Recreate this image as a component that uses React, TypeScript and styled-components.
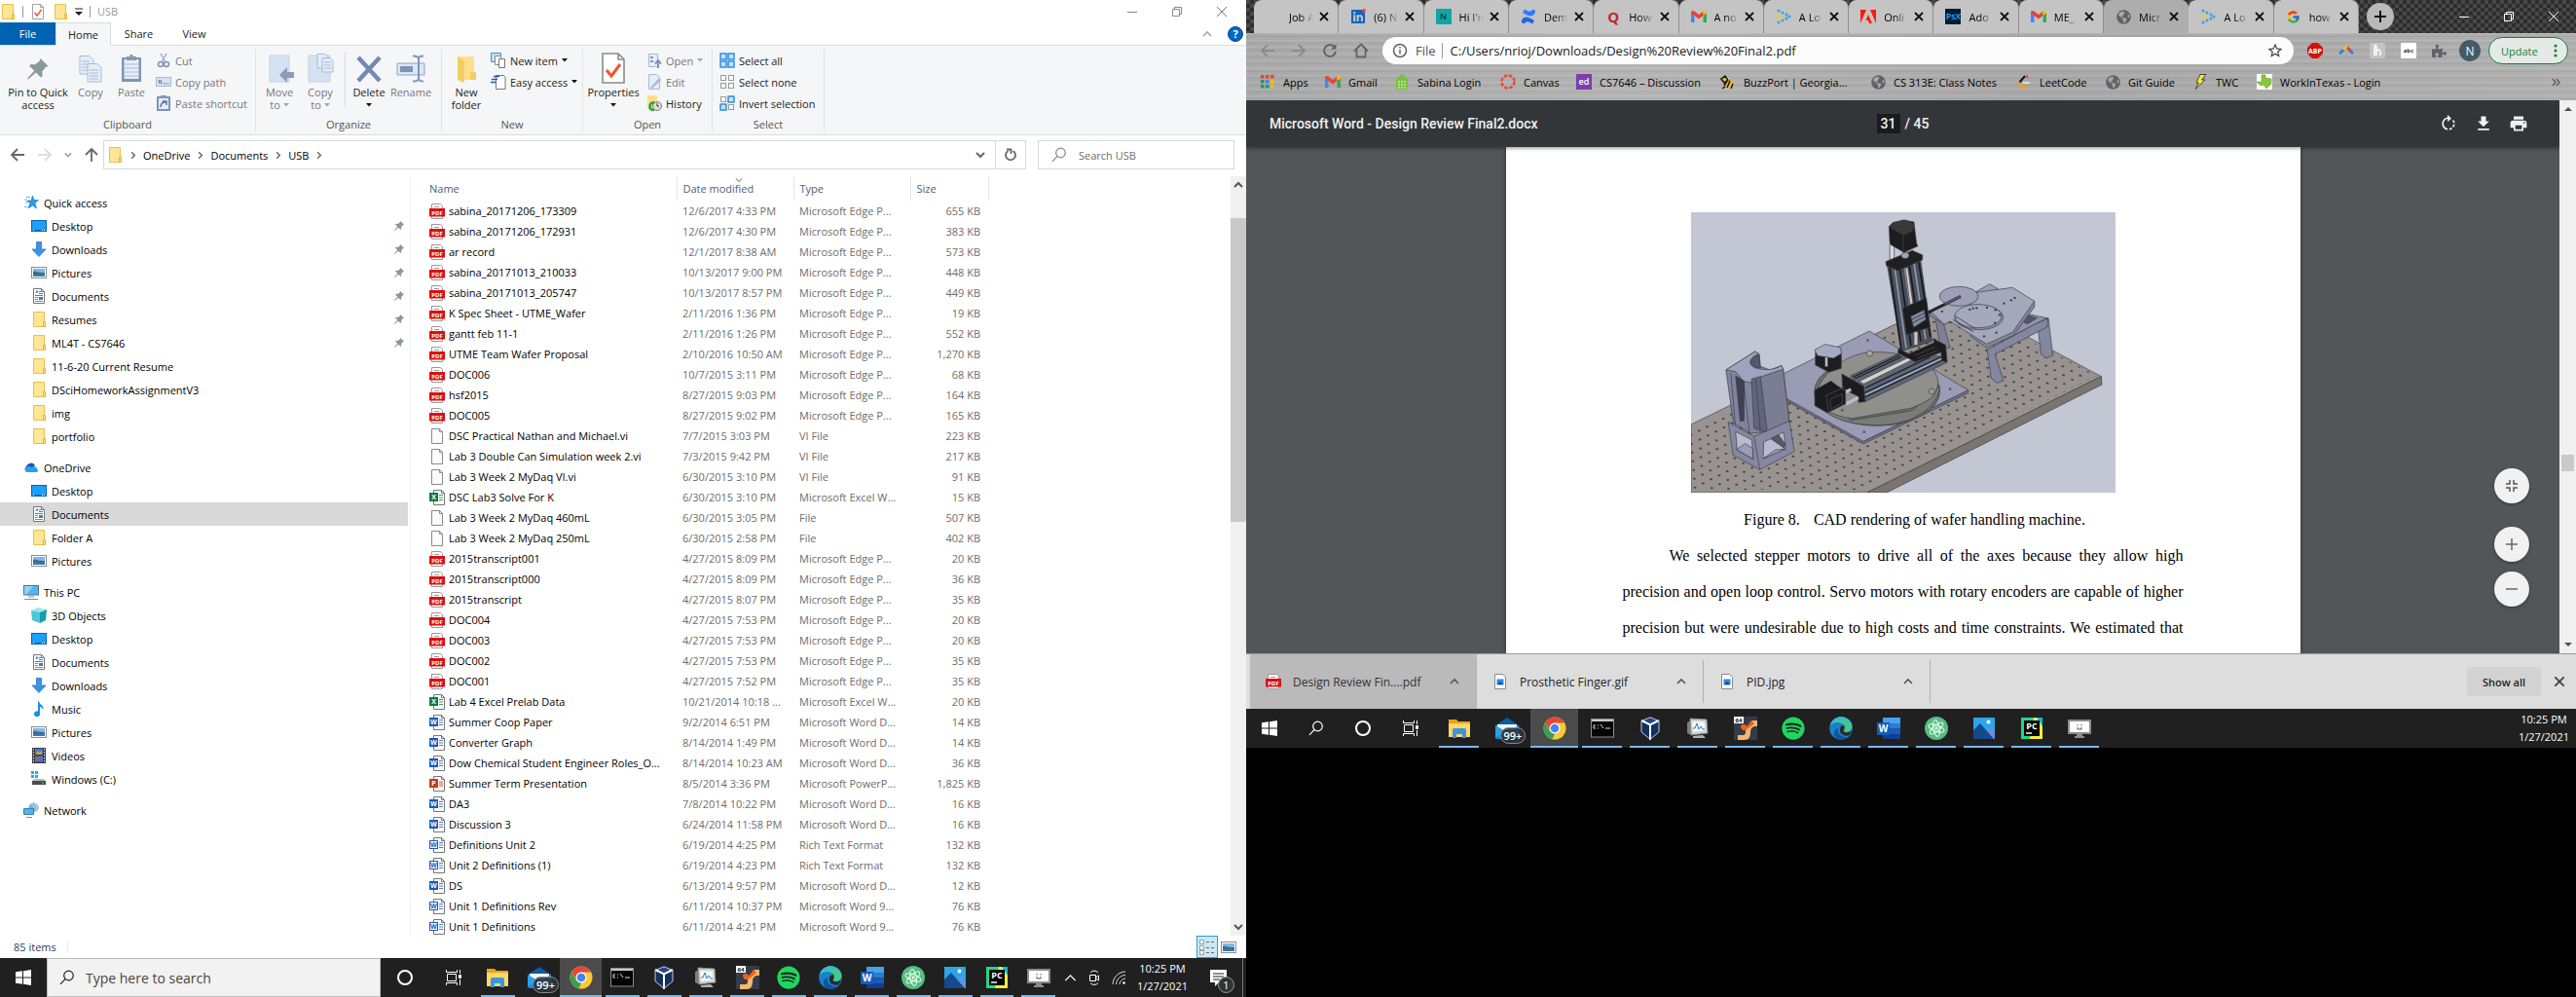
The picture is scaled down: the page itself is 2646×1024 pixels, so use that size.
import React from 'react';
import styled, { createGlobalStyle, css, StyleSheetManager } from 'styled-components';
import { FcGoogle } from 'react-icons/fc';
import { FaSpotify, FaLinkedin, FaGlobeAmericas, FaPuzzlePiece } from 'react-icons/fa';
import { MdRotateRight, MdDownload, MdPrint, MdStarBorder } from 'react-icons/md';

const UI = `"Open Sans", "Noto Sans", sans-serif`;

const Global = createGlobalStyle`
  *, *::before, *::after { box-sizing: border-box; }
  body { margin: 0; background: #000; font-family: ${UI}; font-size: 11px; color: #000; }
  button, input { font: inherit; color: inherit; border: 0; background: none; padding: 0; margin: 0; }
  input:focus { outline: none; }
  a { color: inherit; text-decoration: none; }
  svg { display: block; flex: none; }
`;

/* props that only feed the templates and never reach the DOM */
const STYLE_PROPS = new Set(['w', 'h', 'c', 'off', 'on', 'run', 'kind', 'pad', 'left', 'root', 'active', 'before', 'size', 'bg', 'fg', 'big']);
const forward = (prop: string, target: unknown) => (typeof target === 'string' ? !STYLE_PROPS.has(prop) : true);

/* ---------- shared icons ---------- */

type IconProps = { size?: number };

const FolderIcon = () => (
  <svg width="16" height="16" viewBox="0 0 16 16">
    <path d="M2.500.5h11v10l1 1v4h-12z" fill="#ffe694" stroke="#e8c04a" />
    <path d="M12.500 15.500v-5h2v5z" fill="#ffe08a" stroke="#e3b535" />
  </svg>
);
const DesktopIcon = () => (
  <svg width="16" height="16" viewBox="0 0 16 16">
    <rect x=".5" y="2.500" width="15" height="11" fill="#1aa0ff" stroke="#0a64a8" />
    <path d="M1 12h14v1.500H1z" fill="#0a6fc0" />
    <path d="M2 12.500h1M11 12.500h1M13 12.500h1" stroke="#fff" />
  </svg>
);
const DownIcon = () => (
  <svg width="16" height="16" viewBox="0 0 16 16">
    <path d="M5.500.5h5V8h4.500L8 15.500 1 8h4.500z" fill="#3a94e4" stroke="#2a77c0" strokeWidth=".8" />
  </svg>
);
const PictureIcon = () => (
  <svg width="16" height="16" viewBox="0 0 16 16">
    <rect x=".5" y="2.500" width="15" height="11" fill="#fff" stroke="#8d8d8d" />
    <path d="M2 4h12v4H2z" fill="#7db8ec" />
    <path d="M2 7c3-1 5 1 12 1v4H2z" fill="#3c6f86" />
    <path d="M2 10h12v2H2z" fill="#3a78b8" />
  </svg>
);
const DocIcon = () => (
  <svg width="16" height="16" viewBox="0 0 16 16">
    <path d="M2.500.5h8l3 3v12h-11z" fill="#fff" stroke="#777" />
    <path d="M10.500.5v3h3" fill="none" stroke="#777" />
    <path d="M5 5l1-2.500L7 5M8 3.500h2M8 5.500h4M4 7.500h8" stroke="#1d8fe0" fill="none" />
    <path d="M4 9.500h3M4 11.500h3M4 13.500h8" stroke="#888" />
    <path d="M8 9h4v3H8z" fill="#3f7fa8" />
  </svg>
);
const StarIcon = () => (
  <svg width="16" height="16" viewBox="0 0 16 16">
    <path d="M9.500 1l1.500 4.500h4.500L12 8.500l1.500 5.500-4-3-4.500 3L7 8.500 3.500 6H8z" fill="#2b9ae8" stroke="#1676c0" strokeWidth=".6" />
    <path d="M3 2.500h4M1 5h3M2 8h3M1 12.500h3" stroke="#69b8ef" />
  </svg>
);
const CloudIcon = () => (
  <svg width="16" height="16" viewBox="0 0 16 16">
    <path d="M3 12a3 3 0 0 1 0-5 5 5 0 0 1 9-1l-6 6z" fill="#0a5fb4" />
    <path d="M3 13a3 3 0 0 1 1-5.500c2-1 4 0 5 1 1-2 5-1.500 5 1A2 2 0 0 1 14 13z" fill="#2aa0e8" />
  </svg>
);
const PcIcon = () => (
  <svg width="16" height="16" viewBox="0 0 16 16">
    <rect x=".5" y="1.500" width="15" height="9.500" fill="#52b5f2" stroke="#5c6f7c" />
    <path d="M1 2h9L3 10.500H1z" fill="#8fd2fa" />
    <path d="M5 13h6M1 15.500h14" stroke="#7a8d99" />
  </svg>
);
const CubeIcon = () => (
  <svg width="16" height="16" viewBox="0 0 16 16">
    <path d="M0 3l7-3 9 2-7 3z" fill="#9be7ee" />
    <path d="M0 3l9 2v11l-8-3z" fill="#4cc7d6" />
    <path d="M9 5l7-3-1 11-6 3z" fill="#169ab0" />
  </svg>
);
const MusicIcon = () => (
  <svg width="16" height="16" viewBox="0 0 16 16">
    <path d="M8 0c0 4 6 4 4 9-.5-2-2-3-3-3v7a3 3 0 1 1-2-2.500V0z" fill="#1592ea" />
  </svg>
);
const VideoIcon = () => (
  <svg width="16" height="16" viewBox="0 0 16 16">
    <path d="M1 0h14v16H1z" fill="#3a3a3a" />
    <path d="M2.500 1v14M13.500 1v14" stroke="#ddd" strokeDasharray="1.500 1.500" />
    <path d="M4 1h8v6H4zM4 8.500h8v6H4z" fill="#3d7ad8" />
    <path d="M5 6l2-3 2 2 2-2v4H5z" fill="#e0a020" />
    <path d="M5 13l3-3 3 3z" fill="#d84a2a" />
  </svg>
);
const DriveIcon = () => (
  <svg width="16" height="16" viewBox="0 0 16 16">
    <path d="M0 0h3v3H0zM4 0h3v3H4zM0 4h3v3H0zM4 4h3v3H4z" fill="#18b3ea" />
    <path d="M3 8h10l2 2H1z" fill="#b9bcbe" />
    <path d="M1 10h14v4H1z" fill="#4a4d50" />
    <path d="M11 12h2" stroke="#4ade4a" />
  </svg>
);
const NetworkIcon = () => (
  <svg width="16" height="16" viewBox="0 0 16 16">
    <circle cx="10.500" cy="5.500" r="5" fill="#7fb2d6" />
    <path d="M8 2c3 0 4 3 2 5M12 1c2 3 2 6 0 9" stroke="#dceefa" fill="none" />
    <path d="M.5 6.500h10v6H.5z" fill="#4db4f4" stroke="#3e7da6" />
    <path d="M3 15.500h6" stroke="#7a8d99" />
  </svg>
);
const PinIcon = ({ size = 12 }: IconProps) => (
  <svg width={size} height={size} viewBox="0 0 12 12">
    <path d="M7.500 0L12 4.500l-1.500.5-2 2.500.2 2.500-1 .8L5 8 .5 12 0 11.500 4 7 1.200 4.300l.8-1 2.500.2L7 1.500z" fill="#8a959c" />
  </svg>
);
const Magnifier = ({ color = '#777' }: { color?: string }) => (
  <svg width="16" height="16" viewBox="0 0 16 16" fill="none" stroke={color} strokeWidth="1.200">
    <circle cx="9.500" cy="6" r="4.800" />
    <path d="M6.200 9.400L1 14.800" />
  </svg>
);
const Chevron = ({ dir = 'down', size = 10, color = '#666', width = 1.6 }: { dir?: 'down' | 'up' | 'right'; size?: number; color?: string; width?: number }) => (
  <svg width={size} height={size} viewBox="0 0 10 10" fill="none" stroke={color} strokeWidth={width}>
    <path d={dir === 'down' ? 'M1 3l4 4 4-4' : dir === 'up' ? 'M1 7l4-4 4 4' : 'M3.500 1.500L7 5 3.500 8.500'} />
  </svg>
);
const Triangle = ({ color = '#111' }: { color?: string }) => (
  <svg width="6" height="4" viewBox="0 0 6 4"><path d="M0 0h6L3 3.500z" fill={color} /></svg>
);
const Caption = ({ kind, color }: { kind: 'min' | 'restore' | 'close'; color: string }) => (
  <svg width="12" height="12" viewBox="0 0 12 12" fill="none" stroke={color}>
    {kind === 'min' && <path d="M1 6.500h10" />}
    {kind === 'restore' && <path d="M1.500 3.500h7v7h-7zM3.500 3.500v-2h7v7h-2" />}
    {kind === 'close' && <path d="M1 1l10 10M11 1L1 11" />}
  </svg>
);
const PropsIcon = ({ size = 16 }: IconProps) => (
  <svg width={size} height={size} viewBox="0 0 16 16">
    <path d="M2.500.5h8l3 3v12h-11z" fill="#fff" stroke="#8a8a8a" strokeWidth=".8" />
    <path d="M10.500.5v3h3" fill="none" stroke="#8a8a8a" strokeWidth=".8" />
    <path d="M4.500 9l2.500 3 4.500-6" fill="none" stroke="#f0562a" strokeWidth="1.500" />
  </svg>
);

type FileKind = 'pdf' | 'blank' | 'xls' | 'doc' | 'rtf' | 'ppt';
const IconText = styled.text`
  font-family: ${UI};
  font-weight: 700;
`;
const FileIcon = ({ kind }: { kind: FileKind }) => {
  if (kind === 'blank')
    return (
      <svg width="16" height="16" viewBox="0 0 16 16">
        <path d="M2.500.5h8l3 3v12h-11z" fill="#fbfbfb" stroke="#8a8a8a" />
        <path d="M10.500.5v3h3" fill="none" stroke="#8a8a8a" />
      </svg>
    );
  if (kind === 'pdf')
    return (
      <svg width="16" height="16" viewBox="0 0 16 16">
        <path d="M2.500.5h9l2 2v13h-11z" fill="#fff" stroke="#999" />
        <path d="M5 3.500h5" stroke="#999" />
        <path d="M0 5h16v8.500H0z" fill="#dc0f16" />
        <IconText x="8" y="11.500" fontSize="6" fill="#fff" textAnchor="middle">PDF</IconText>
      </svg>
    );
  const c = kind === 'xls' ? '#107c41' : kind === 'ppt' ? '#c43e1c' : '#185abd';
  const light = kind === 'rtf';
  return (
    <svg width="16" height="16" viewBox="0 0 16 16">
      <path d="M4.500.5h8l3 3v12h-11z" fill="#fff" stroke="#767676" />
      <path d="M12.500.5v3h3" fill="none" stroke="#767676" />
      {kind === 'ppt' ? <path d="M10 5h4v6h-4z" fill="#f6a58d" /> : <path d="M10 5.500h4M10 8h4M10 10.500h4" stroke={c} strokeOpacity=".8" />}
      <rect x=".5" y="3.500" width="8" height="8" fill={light ? '#fff' : c} stroke={c} />
      <IconText x="4.500" y="10" fontSize="7" fill={light ? c : '#fff'} textAnchor="middle">
        {kind === 'xls' ? 'X' : kind === 'ppt' ? 'P' : 'W'}
      </IconText>
    </svg>
  );
};

/* ---------- app icons for the taskbar ---------- */

const WinLogo = () => (
  <svg width="16" height="16" viewBox="0 0 16 16">
    <path d="M0 2.300l7-1v6.200H0zM8 1.200L16 0v7.500H8zM0 8.500h7v6.200l-7-1zM8 8.500h8V16l-8-1.200z" fill="#fff" />
  </svg>
);
const CortanaIcon = () => (
  <svg width="18" height="18" viewBox="0 0 18 18"><circle cx="9" cy="9" r="7" fill="none" stroke="#fff" strokeWidth="2" /></svg>
);
const TaskViewIcon = () => (
  <svg width="18" height="18" viewBox="0 0 18 18" fill="none" stroke="#fff">
    <path d="M2.500 5.500h9v7h-9zM1.500 1v2.500h11V1M1.500 17v-2.500h11V17M15.500 1v4M15.500 11v6" />
    <path d="M14.500 6.500h2v3h-2z" fill="#fff" />
  </svg>
);
const ExplorerIcon = () => (
  <svg width="24" height="24" viewBox="0 0 24 24">
    <path d="M1 3h8l2 2h12v16H1z" fill="#e8a317" />
    <path d="M1 7h22v14H1z" fill="#ffd868" />
    <path d="M5 22v-8a2 2 0 0 1 2-2h10a2 2 0 0 1 2 2v8h-4v-4H9v4z" fill="#3b96dd" />
  </svg>
);
const MailIcon = () => (
  <svg width="24" height="24" viewBox="0 0 24 24">
    <path d="M0 9l12-8 12 8v13H0z" fill="#0c59a4" />
    <path d="M2 8h20v6H2z" fill="#eef6fc" />
    <path d="M0 9l12 7L0 22zM24 9l-12 7 12 6z" fill="#2ba0ea" />
    <path d="M0 23l12-9 12 9z" fill="#1e8bdc" />
  </svg>
);
const ChromeIcon = () => (
  <svg width="24" height="24" viewBox="0 0 24 24">
    <circle cx="12" cy="12" r="11.500" fill="#f9cb36" />
    <path d="M12 .5a11.500 11.500 0 0 1 10 6H12L7 14 2 6.200A11.500 11.500 0 0 1 12 .5z" fill="#e04a3a" />
    <path d="M2 6.200L7 15l5 2.500L9.500 23.200A11.500 11.500 0 0 1 2 6.200z" fill="#35a052" />
    <circle cx="12" cy="12" r="5.500" fill="#fff" />
    <circle cx="12" cy="12" r="4.300" fill="#4284f3" />
  </svg>
);
const CmdIcon = () => (
  <svg width="24" height="24" viewBox="0 0 24 24">
    <rect x=".5" y="2.500" width="23" height="18.500" fill="#050505" stroke="#8c8c8c" />
    <path d="M1 3h22v2H1z" fill="#c5c9cc" />
    <path d="M3 9h2M3 9v3M3 12h2M7 9h1M7 12h1M10 8l3 4M15 12h5" stroke="#ddd" fill="none" />
  </svg>
);
const VBoxIcon = () => (
  <svg width="24" height="24" viewBox="0 0 24 24">
    <path d="M12 0l9 4v12l-9 8-9-8V4z" fill="#16305c" />
    <path d="M12 1l8 3.500-8 4-8-4z" fill="#27477c" />
    <path d="M3 4l9 4.500L21 4M12 8.500V24" stroke="#fff" strokeWidth="2" fill="none" />
    <path d="M12 .8l9 3.700v11.300l-9 7.500-9-7.500V4.500z" fill="none" stroke="#b9cbe4" />
  </svg>
);
const MonitorIcon = () => (
  <svg width="24" height="24" viewBox="0 0 24 24">
    <path d="M1 6l4-2v15l-4-2z" fill="#7c7f7c" />
    <path d="M4 2l17 1 1 14-17 2z" fill="#cfd2cf" stroke="#868886" />
    <path d="M6 5l13 .5.5 9L7 16z" fill="#f3fafc" />
    <path d="M7 12h2l2-5 2 6 2-3 2 3h2" fill="none" stroke="#2a7fb8" />
    <path d="M7 20l10-1 3 3H7z" fill="#b0b2b0" />
  </svg>
);
const UltraIcon = () => (
  <svg width="24" height="24" viewBox="0 0 24 24">
    <path d="M0 0h24v24H0z" fill="#353b48" />
    <path d="M4 19h6c1 0 2-1 2-3 0-5 2-7 5-9l2-3h5v6h-3c-3 1-4 3-4 6 0 5-2 8-6 8H4z" fill="#f6b66c" />
    <path d="M7 9c3-2 5-1 6 1 2-1 3-4 5-6l3 3c-3 2-5 5-9 7-3 1-5-1-5-5z" fill="#f0611c" />
    <path d="M0 0h10v7H0z" fill="#fff" />
    <IconText x="5" y="6" fontSize="6" textAnchor="middle" fill="#111">64</IconText>
  </svg>
);
const EdgeIcon = () => (
  <svg width="24" height="24" viewBox="0 0 24 24">
    <circle cx="12" cy="12" r="11.800" fill="#1b7fd0" />
    <path d="M1 9C3 2 9 0 13 .2 20 1 24 6 23.500 11c-.5 4-4 5.500-8 4.500-2-.5 1-2 .5-5C15 6 6 4 1 9z" fill="#46c78c" />
    <path d="M1 9C3 2 9 0 13 .2 18 1 21 4 22.500 7 16 2 6 3 1 9z" fill="#36b8d8" />
    <path d="M9 12c-1 6 3 10 11 9-3 3-9 4-13 1-4-4-2-9 2-10z" fill="#0f559c" />
    <path d="M15 15.500c4 2 7 0 8-2-.5 3-1 4-3 6-6 1-10-2-9-7 0-2 2-4 4-3 2 2-1 4 0 6z" fill="#2b2b2b" />
  </svg>
);
const WordIcon = () => (
  <svg width="24" height="24" viewBox="0 0 24 24">
    <path d="M6 1h18v6H6z" fill="#41a5ee" /><path d="M6 7h18v5.500H6z" fill="#2b7cd3" />
    <path d="M6 12.500h18V18H6z" fill="#185abd" /><path d="M6 18h18v5H6z" fill="#103f91" />
    <path d="M0 6h13v13H0z" fill="#185abd" />
    <IconText x="6.500" y="16" fontSize="10" textAnchor="middle" fill="#fff">W</IconText>
  </svg>
);
const AtomIcon = () => (
  <svg width="24" height="24" viewBox="0 0 24 24" fill="none" stroke="#e8fff2">
    <circle cx="12" cy="12" r="12" fill="#58bd80" stroke="none" />
    <ellipse cx="12" cy="12" rx="8.500" ry="3.200" transform="rotate(20 12 12)" />
    <ellipse cx="12" cy="12" rx="8.500" ry="3.200" transform="rotate(80 12 12)" />
    <ellipse cx="12" cy="12" rx="8.500" ry="3.200" transform="rotate(140 12 12)" />
    <circle cx="12" cy="12" r="1.200" fill="#e8fff2" />
  </svg>
);
const PhotosIcon = () => (
  <svg width="24" height="24" viewBox="0 0 24 24">
    <path d="M1 1h22v22H1z" fill="#2ba6ea" />
    <path d="M12 15l5-4 6 6v6H12z" fill="#6b8fdd" />
    <path d="M1 14l7-7 14 16H1z" fill="#144a8c" />
    <circle cx="16.500" cy="5.500" r="2" fill="#fff" />
  </svg>
);
const PyCharmIcon = () => (
  <svg width="24" height="24" viewBox="0 0 24 24">
    <path d="M1 1h22v22H1z" fill="#21d789" /><path d="M14 1h9v22H10z" fill="#f3ee3d" /><path d="M17 1h6v9z" fill="#0fb8dd" />
    <path d="M4 4h16v16H4z" fill="#000" />
    <IconText x="12" y="13" fontSize="9" textAnchor="middle" fill="#fff">PC</IconText>
    <path d="M6 17h6" stroke="#fff" strokeWidth="1.500" />
  </svg>
);
const ScreenIcon = () => (
  <svg width="24" height="24" viewBox="0 0 24 24">
    <rect x="1" y="4" width="22" height="13" fill="#fff" stroke="#8c8c8c" strokeWidth="2" />
    <path d="M10 8v1.500M14 8v1.500M10 11v2h4v-2" stroke="#555" fill="none" />
    <path d="M9 18h6v2h2v2H7v-2h2z" fill="#8c8c8c" />
  </svg>
);

/* ---------- page ---------- */

const Desktop = styled.div`
  display: grid;
  grid-template-columns: 1280fr 1366fr;
  align-items: start;
`;

/* ---------- explorer ---------- */

const Explorer = styled.section`
  display: flex;
  flex-direction: column;
  height: 100vh;
  min-width: 0;
  background: #fff;
`;
const TitleBar = styled.header`
  display: flex;
  align-items: center;
  height: 23px;
  color: #999;
`;
const TitleLeft = styled.div`
  display: flex;
  align-items: center;
  gap: 7px;
`;
const Divider = styled.i<{ h?: number; c?: string }>`
  width: 1px;
  height: ${(p) => p.h ?? 12}px;
  background: ${(p) => p.c ?? '#999'};
  flex: none;
`;
const CaptionButtons = styled.div<{ pad: number }>`
  display: flex;
  align-self: stretch;
  margin-left: auto;
  padding-right: ${(p) => p.pad}px;
  button {
    display: flex;
    align-items: center;
    justify-content: center;
    width: 46px;
  }
`;
const RibbonTabs = styled.nav`
  display: flex;
  align-items: stretch;
  height: 24px;
  border-bottom: 1px solid #dadbdc;
  color: #222;
`;
const RibbonTab = styled.button<{ kind?: 'file' | 'active' }>`
  width: 57px;
  ${(p) => p.kind === 'file' && css`background: #0063b1; color: #fff;`}
  ${(p) => p.kind === 'active' && css`
    background: #f5f6f7;
    border: 1px solid #dadbdc;
    border-bottom: 0;
    margin-bottom: -1px;
  `}
`;
const HelpArea = styled.div`
  display: flex;
  align-items: center;
  gap: 16px;
  margin-left: auto;
  padding-right: 3px;
`;
const HelpButton = styled.button`
  width: 16px;
  height: 16px;
  border-radius: 50%;
  background: #0067c5;
  border: 1px solid #0a4486;
  color: #fff;
  font-weight: 700;
  line-height: 14px;
`;
const Ribbon = styled.div`
  display: flex;
  height: 92px;
  padding: 3px 0;
  background: #f5f6f7;
  border-bottom: 1px solid #dadbdc;
  color: #222;
`;
const Group = styled.div<{ w: number; pad: number }>`
  display: flex;
  flex-direction: column;
  width: ${(p) => p.w}px;
  border-right: 1px solid #e2e3e4;
  > div {
    display: flex;
    flex: 1;
    padding: 4px 0 0 ${(p) => p.pad}px;
  }
  > div > i { margin: 0 4px; }
`;
const GroupLabel = styled.span`
  line-height: 14px;
  text-align: center;
  color: #555;
`;
const BigButton = styled.button<{ w: number; off?: boolean }>`
  display: flex;
  flex-direction: column;
  align-items: center;
  width: ${(p) => p.w}px;
  line-height: 13px;
  color: ${(p) => (p.off ? '#777' : '#222')};
  white-space: nowrap;
  > svg { height: 32px; margin-bottom: 2px; }
  span { display: flex; align-items: center; gap: 3px; height: 13px; }
`;
const SmallColumn = styled.div<{ left: number }>`
  display: flex;
  flex-direction: column;
  gap: 6px;
  margin-left: ${(p) => p.left}px;
`;
const SmallButton = styled.button<{ off?: boolean }>`
  display: flex;
  align-items: center;
  gap: 4px;
  height: 16px;
  white-space: nowrap;
  color: ${(p) => (p.off ? '#777' : '#222')};
`;
const AddressRow = styled.div`
  display: flex;
  align-items: center;
  height: 42px;
  padding: 0 12px 2px 10px;
`;
const NavButtons = styled.div`
  display: flex;
  align-items: center;
  width: 96px;
  gap: 12px;
`;
const AddressBox = styled.div`
  display: flex;
  flex: 1;
  height: 30px;
  border: 1px solid #d9d9d9;
  align-items: center;
  padding-left: 3px;
  ol { display: flex; align-items: center; list-style: none; margin: 0; padding: 0; }
  li { display: flex; align-items: center; gap: 6px; padding-left: 6px; }
  > button:first-of-type { margin-left: auto; margin-right: 10px; }
`;
const Refresh = styled.button`
  display: flex;
  align-items: center;
  justify-content: center;
  width: 31px;
  align-self: stretch;
  border-left: 1px solid #d9d9d9;
`;
const SearchBox = styled.label`
  display: flex;
  align-items: center;
  gap: 12px;
  width: 202px;
  height: 30px;
  margin-left: 12px;
  padding-left: 13px;
  border: 1px solid #d9d9d9;
  input { flex: 1; min-width: 0; }
  input::placeholder { color: #6d6d6d; opacity: 1; }
`;
const Body = styled.div`
  display: flex;
  flex: 1;
  min-height: 0;
  overflow: hidden;
`;
const Tree = styled.nav`
  width: 422px;
  flex: none;
  padding-top: 15px;
  border-right: 1px solid #f0f0f0;
  ul { list-style: none; margin: 0 2px 8px 0; padding: 0; }
`;
const TreeLink = styled.a<{ root?: boolean; active?: boolean }>`
  display: flex;
  align-items: center;
  gap: 5px;
  height: 24px;
  padding: 0 4px 0 ${(p) => (p.root ? 24 : 32)}px;
  background: ${(p) => (p.active ? '#d9d9d9' : 'transparent')};
  span { flex: 1; }
`;
const ListPane = styled.div`
  flex: 1;
  min-width: 0;
  overflow: hidden;
  padding-left: 13px;
`;
const FileTable = styled.table`
  width: 580px;
  table-layout: fixed;
  border-collapse: collapse;
  white-space: nowrap;
  color: #6d6d6d;
  th {
    position: relative;
    height: 25px;
    padding: 0 0 0 6px;
    text-align: left;
    font-weight: 400;
    color: #4c607a;
    border-right: 1px solid #e5e5e5;
  }
  td { height: 21px; padding: 0 0 0 6px; line-height: 16px; }
  td:last-child { text-align: right; padding-right: 8px; }
`;
const SortMark = styled.span`
  position: absolute;
  top: 0;
  left: 50%;
`;
const FileName = styled.a`
  display: flex;
  align-items: center;
  gap: 4px;
  color: #000;
`;
const Scrollbar = styled.div<{ w: number }>`
  display: flex;
  flex-direction: column;
  align-items: center;
  width: ${(p) => p.w}px;
  flex: none;
  background: #f0f0f0;
  > svg { margin: 4px 0; }
`;
const Thumb = styled.span<{ before: number; h: number; w: number }>`
  width: ${(p) => p.w}px;
  height: ${(p) => p.h}px;
  margin: ${(p) => p.before}px 0 auto;
  background: #c9c9c9;
`;
const StatusBar = styled.footer`
  display: flex;
  align-items: center;
  gap: 11px;
  height: 23px;
  padding: 0 7px 0 14px;
  color: #2a3f5f;
  > div { display: flex; margin-left: auto; }
`;
const ViewButton = styled.button<{ active?: boolean }>`
  display: flex;
  align-items: center;
  justify-content: center;
  width: 22px;
  height: 23px;
  ${(p) => p.active && css`background: #cce8f6; border: 1px solid #26a0da;`}
`;

/* ---------- taskbar ---------- */

const Bar = styled.footer`
  display: flex;
  align-items: stretch;
  height: 40px;
  flex: none;
  background: #202020;
  color: #fff;
`;
const BarButton = styled.button<{ w: number }>`
  display: flex;
  align-items: center;
  justify-content: center;
  width: ${(p) => p.w}px;
  flex: none;
`;
const BarSearch = styled.label`
  display: flex;
  align-items: center;
  gap: 11px;
  width: 343px;
  padding-left: 12px;
  background: #f2f2f2;
  border: 1px solid #bdbdbd;
  input { flex: 1; font-size: 14px; }
  input::placeholder { color: #444; opacity: 1; }
`;
const AppStrip = styled.div<{ w: number }>`
  display: grid;
  grid-template-columns: repeat(14, minmax(0, 1fr));
  width: ${(p) => p.w}px;
  flex: none;
`;
const AppButton = styled.button<{ on?: boolean; run?: boolean }>`
  position: relative;
  display: flex;
  align-items: center;
  justify-content: center;
  background: ${(p) => (p.on ? '#4b4b4b' : 'transparent')};
  &::after {
    content: '';
    position: absolute;
    left: ${(p) => (p.on ? 0 : 4)}px;
    right: ${(p) => (p.on ? 0 : 4)}px;
    bottom: 0;
    height: 2px;
    background: ${(p) => (p.run ? '#76b9ed' : 'transparent')};
  }
`;
const Badge = styled.span`
  position: absolute;
  left: calc(50% - 7px);
  top: 19px;
  padding: 0 3px;
  border: 1px solid #8a8a8a;
  border-radius: 9px;
  background: rgba(45, 52, 60, 0.9);
  font-weight: 600;
  line-height: 15px;
`;
const Tray = styled.div`
  display: flex;
  align-items: center;
  margin-left: auto;
  gap: 11px;
`;
const Clock = styled.time`
  line-height: 18px;
  text-align: center;
`;
const Notice = styled.button`
  position: relative;
  display: flex;
  align-items: center;
  width: 46px;
  padding-left: 12px;
  height: 40px;
  border-right: 1px solid #777;
  margin-right: 3px;
  span {
    position: absolute;
    left: 20px;
    top: 19px;
    width: 17px;
    border: 1px solid #999;
    border-radius: 50%;
    background: #333;
    line-height: 15px;
    text-align: center;
  }
`;

const apps: { name: string; icon: React.ReactNode }[] = [
  { name: 'File Explorer', icon: <ExplorerIcon /> },
  { name: 'Mail', icon: <MailIcon /> },
  { name: 'Chrome', icon: <ChromeIcon /> },
  { name: 'Command Prompt', icon: <CmdIcon /> },
  { name: 'VirtualBox', icon: <VBoxIcon /> },
  { name: 'System monitor', icon: <MonitorIcon /> },
  { name: 'Emulator', icon: <UltraIcon /> },
  { name: 'Spotify', icon: <FaSpotify size={24} color="#1ed760" /> },
  { name: 'Edge', icon: <EdgeIcon /> },
  { name: 'Word', icon: <WordIcon /> },
  { name: 'Atom', icon: <AtomIcon /> },
  { name: 'Photos', icon: <PhotosIcon /> },
  { name: 'PyCharm', icon: <PyCharmIcon /> },
  { name: 'Screen', icon: <ScreenIcon /> },
];

const Apps = ({ w }: { w: number }) => (
  <AppStrip w={w}>
    {apps.map((a) => (
      <AppButton key={a.name} aria-label={a.name} on={a.name === 'Chrome'} run={a.name !== 'Mail'}>
        {a.icon}
        {a.name === 'Mail' && <Badge>99+</Badge>}
      </AppButton>
    ))}
  </AppStrip>
);

const Time = () => (
  <Clock>10:25 PM<br />1/27/2021</Clock>
);

/* ---------- explorer data ---------- */

type TreeItem = { label: string; icon: React.ReactNode; pin?: boolean; active?: boolean };
const tree: { root: TreeItem; items: TreeItem[] }[] = [
  {
    root: { label: 'Quick access', icon: <StarIcon /> },
    items: [
      { label: 'Desktop', icon: <DesktopIcon />, pin: true },
      { label: 'Downloads', icon: <DownIcon />, pin: true },
      { label: 'Pictures', icon: <PictureIcon />, pin: true },
      { label: 'Documents', icon: <DocIcon />, pin: true },
      { label: 'Resumes', icon: <FolderIcon />, pin: true },
      { label: 'ML4T - CS7646', icon: <FolderIcon />, pin: true },
      { label: '11-6-20 Current Resume', icon: <FolderIcon /> },
      { label: 'DSciHomeworkAssignmentV3', icon: <FolderIcon /> },
      { label: 'img', icon: <FolderIcon /> },
      { label: 'portfolio', icon: <FolderIcon /> },
    ],
  },
  {
    root: { label: 'OneDrive', icon: <CloudIcon /> },
    items: [
      { label: 'Desktop', icon: <DesktopIcon /> },
      { label: 'Documents', icon: <DocIcon />, active: true },
      { label: 'Folder A', icon: <FolderIcon /> },
      { label: 'Pictures', icon: <PictureIcon /> },
    ],
  },
  {
    root: { label: 'This PC', icon: <PcIcon /> },
    items: [
      { label: '3D Objects', icon: <CubeIcon /> },
      { label: 'Desktop', icon: <DesktopIcon /> },
      { label: 'Documents', icon: <DocIcon /> },
      { label: 'Downloads', icon: <DownIcon /> },
      { label: 'Music', icon: <MusicIcon /> },
      { label: 'Pictures', icon: <PictureIcon /> },
      { label: 'Videos', icon: <VideoIcon /> },
      { label: 'Windows (C:)', icon: <DriveIcon /> },
    ],
  },
  { root: { label: 'Network', icon: <NetworkIcon /> }, items: [] },
];

const EDGE = 'Microsoft Edge P...';
const WORD = 'Microsoft Word D...';
const files: [FileKind, string, string, string, string][] = [
  ['pdf', 'sabina_20171206_173309', '12/6/2017 4:33 PM', EDGE, '655 KB'],
  ['pdf', 'sabina_20171206_172931', '12/6/2017 4:30 PM', EDGE, '383 KB'],
  ['pdf', 'ar record', '12/1/2017 8:38 AM', EDGE, '573 KB'],
  ['pdf', 'sabina_20171013_210033', '10/13/2017 9:00 PM', EDGE, '448 KB'],
  ['pdf', 'sabina_20171013_205747', '10/13/2017 8:57 PM', EDGE, '449 KB'],
  ['pdf', 'K Spec Sheet - UTME_Wafer', '2/11/2016 1:36 PM', EDGE, '19 KB'],
  ['pdf', 'gantt feb 11-1', '2/11/2016 1:26 PM', EDGE, '552 KB'],
  ['pdf', 'UTME Team Wafer Proposal', '2/10/2016 10:50 AM', EDGE, '1,270 KB'],
  ['pdf', 'DOC006', '10/7/2015 3:11 PM', EDGE, '68 KB'],
  ['pdf', 'hsf2015', '8/27/2015 9:03 PM', EDGE, '164 KB'],
  ['pdf', 'DOC005', '8/27/2015 9:02 PM', EDGE, '165 KB'],
  ['blank', 'DSC Practical Nathan and Michael.vi', '7/7/2015 3:03 PM', 'VI File', '223 KB'],
  ['blank', 'Lab 3 Double Can Simulation week 2.vi', '7/3/2015 9:42 PM', 'VI File', '217 KB'],
  ['blank', 'Lab 3 Week 2 MyDaq VI.vi', '6/30/2015 3:10 PM', 'VI File', '91 KB'],
  ['xls', 'DSC Lab3 Solve For K', '6/30/2015 3:10 PM', 'Microsoft Excel W...', '15 KB'],
  ['blank', 'Lab 3 Week 2 MyDaq 460mL', '6/30/2015 3:05 PM', 'File', '507 KB'],
  ['blank', 'Lab 3 Week 2 MyDaq 250mL', '6/30/2015 2:58 PM', 'File', '402 KB'],
  ['pdf', '2015transcript001', '4/27/2015 8:09 PM', EDGE, '20 KB'],
  ['pdf', '2015transcript000', '4/27/2015 8:09 PM', EDGE, '36 KB'],
  ['pdf', '2015transcript', '4/27/2015 8:07 PM', EDGE, '35 KB'],
  ['pdf', 'DOC004', '4/27/2015 7:53 PM', EDGE, '20 KB'],
  ['pdf', 'DOC003', '4/27/2015 7:53 PM', EDGE, '20 KB'],
  ['pdf', 'DOC002', '4/27/2015 7:53 PM', EDGE, '35 KB'],
  ['pdf', 'DOC001', '4/27/2015 7:52 PM', EDGE, '35 KB'],
  ['xls', 'Lab 4 Excel Prelab Data', '10/21/2014 10:18 ...', 'Microsoft Excel W...', '20 KB'],
  ['doc', 'Summer Coop Paper', '9/2/2014 6:51 PM', WORD, '14 KB'],
  ['doc', 'Converter Graph', '8/14/2014 1:49 PM', WORD, '14 KB'],
  ['doc', 'Dow Chemical Student Engineer Roles_O...', '8/14/2014 10:23 AM', WORD, '36 KB'],
  ['ppt', 'Summer Term Presentation', '8/5/2014 3:36 PM', 'Microsoft PowerP...', '1,825 KB'],
  ['doc', 'DA3', '7/8/2014 10:22 PM', WORD, '16 KB'],
  ['doc', 'Discussion 3', '6/24/2014 11:58 PM', WORD, '16 KB'],
  ['rtf', 'Definitions Unit 2', '6/19/2014 4:25 PM', 'Rich Text Format', '132 KB'],
  ['rtf', 'Unit 2 Definitions (1)', '6/19/2014 4:23 PM', 'Rich Text Format', '132 KB'],
  ['doc', 'DS', '6/13/2014 9:57 PM', WORD, '12 KB'],
  ['rtf', 'Unit 1 Definitions Rev', '6/11/2014 10:37 PM', 'Microsoft Word 9...', '76 KB'],
  ['rtf', 'Unit 1 Definitions', '6/11/2014 4:21 PM', 'Microsoft Word 9...', '76 KB'],
];

/* ---------- ribbon drawings ---------- */

const PALE = '#e4edf8';
const STEEL = '#a9bad4';
const Big = ({ children }: { children: React.ReactNode }) => (
  <svg width="32" height="32" viewBox="0 0 32 32">{children}</svg>
);
const Small = ({ children }: { children: React.ReactNode }) => (
  <svg width="16" height="16" viewBox="0 0 16 16" fill="none">{children}</svg>
);
const Sheets = () => (
  <g fill={PALE} stroke={STEEL}>
    <path d="M5 3.500h10l4 4V22H5z" /><path d="M7 9h8M7 12h8M7 15h8M7 18h8" />
    <path d="M13 11.500h10l4 4V30H13z" /><path d="M15 18h9M15 21h9M15 24h9M15 27h9" />
  </g>
);

const RibbonBar = () => (
  <Ribbon>
    <Group w={263} pad={8}>
      <div>
        <BigButton w={62}>
          <Big><g transform="translate(5 6) scale(1.800)"><path d="M7.500 0L12 4.500l-1.500.5-2 2.500.2 2.500-1 .8L5 8 .5 12 0 11.500 4 7 1.200 4.300l.8-1 2.500.2L7 1.500z" fill="#8d989c" /></g></Big>
          <span>Pin to Quick</span><span>access</span>
        </BigButton>
        <BigButton w={46} off><Big><Sheets /></Big><span>Copy</span></BigButton>
        <BigButton w={38} off>
          <Big>
            <path d="M6 5h20v25H6z" fill="#7d93b8" /><path d="M8.500 7h15v20h-15z" fill={PALE} />
            <path d="M9 12h14M9 16h14M9 20h14M9 24h14" stroke={STEEL} /><path d="M11 4h3l1-2h2l1 2h3v4H11z" fill="#8b98ae" />
          </Big>
          <span>Paste</span>
        </BigButton>
        <SmallColumn left={6}>
          <SmallButton off>
            <Small><path d="M5 1l5 9M11 1L6 10" stroke="#9fafc8" strokeWidth="1.500" /><circle cx="5" cy="12" r="2.500" stroke="#8094b8" strokeWidth="1.500" /><circle cx="11" cy="12" r="2.500" stroke="#8094b8" strokeWidth="1.500" /></Small>
            <span>Cut</span>
          </SmallButton>
          <SmallButton off>
            <Small><rect x=".5" y="3.500" width="15" height="9" fill="#d6e2f2" stroke={STEEL} /><path d="M3 6l1 4M5 6l1 4M8 10h1M10 10h1M12 10h1" stroke="#4f6486" /></Small>
            <span>Copy path</span>
          </SmallButton>
          <SmallButton off>
            <Small><rect x="2" y="2" width="12" height="13" fill={PALE} stroke="#7d93b8" strokeWidth="2" /><path d="M5 0h6v3H5z" fill="#8b98ae" /><path d="M5 12c0-4 2-5 5-5M7 6h4v4" stroke="#5873a4" strokeWidth="1.500" /></Small>
            <span>Paste shortcut</span>
          </SmallButton>
        </SmallColumn>
      </div>
      <GroupLabel>Clipboard</GroupLabel>
    </Group>
    <Group w={191} pad={3}>
      <div>
        <BigButton w={42} off>
          <Big><path d="M6 3h20v27H6z" fill="#d5e2f1" stroke="#c1d2e6" /><path d="M31 20v6h-7v5l-8-8 8-8v5z" fill="#8b9cba" /></Big>
          <span>Move</span><span>to <Triangle color="#a5a5a5" /></span>
        </BigButton>
        <BigButton w={42} off>
          <Big><path d="M4 3h22v27H4z" fill="#d5e2f1" stroke="#c1d2e6" /><g fill={PALE} stroke={STEEL}><path d="M13 1.500h8l3 3V16H13z" /><path d="M18 5.500h8l3 3V20H18z" /><path d="M20 10h7M20 13h7M20 16h7" /></g></Big>
          <span>Copy</span><span>to <Triangle color="#a5a5a5" /></span>
        </BigButton>
        <Divider h={56} c="#dadbdc" />
        <BigButton w={40}>
          <Big><path d="M5 5l22 24M27 5L5 29" stroke="#7389b3" strokeWidth="4.500" /></Big>
          <span>Delete</span><span><Triangle /></span>
        </BigButton>
        <BigButton w={46} off>
          <Big><path d="M2 11h28v12H2z" fill="#dce7f4" stroke="#8fa4c4" /><path d="M5 14h13v6H5z" fill="#7d93b8" /><path d="M18 3.500c4 0 6 1 6 3 0-2 2-3 5-3M24 6v21M18 29.500c4 0 6-1 6-3 0 2 2 3 5 3" stroke="#8195ba" strokeWidth="2" fill="none" /></Big>
          <span>Rename</span>
        </BigButton>
      </div>
      <GroupLabel>Organize</GroupLabel>
    </Group>
    <Group w={145} pad={4}>
      <div>
        <BigButton w={42}>
          <Big><path d="M7 4h17v16l2 2v6H7z" fill="#ffe08a" /><path d="M20 20h6v8h-6zM7 4l7 5v22l-7-3z" fill="#f4cd64" /></Big>
          <span>New</span><span>folder</span>
        </BigButton>
        <SmallColumn left={4}>
          <SmallButton>
            <Small><path d="M.5.5h10v9H.5z" fill="#bfe3f7" stroke="#3f92c4" /><path d="M4.500 3.500h6v9h-6z" fill="#fff" stroke="#888" /><path d="M8.500 6.500h6v9h-6z" fill="#fff" stroke="#777" /></Small>
            <span>New item</span><Triangle />
          </SmallButton>
          <SmallButton>
            <Small><path d="M5.500 1.500h8l1.500 2v12H5.500z" fill="#fff" stroke="#777" /><path d="M3 2.500h6M1 5.500h6M0 8.500h5" stroke="#2a5aa8" strokeWidth="1.500" /></Small>
            <span>Easy access</span><Triangle />
          </SmallButton>
        </SmallColumn>
      </div>
      <GroupLabel>New</GroupLabel>
    </Group>
    <Group w={133} pad={3}>
      <div>
        <BigButton w={56}><PropsIcon size={32} /><span>Properties</span><span><Triangle /></span></BigButton>
        <SmallColumn left={6}>
          <SmallButton off>
            <Small><path d="M2.500 1.500h9v13h-9z" fill={PALE} stroke={STEEL} /><path d="M4 4h3v2H4zM4 8h3v2H4z" fill="#8195ba" /><path d="M12 16V9M9 11.500L12 8l3 3.500" stroke="#8195ba" strokeWidth="2" /></Small>
            <span>Open</span><Triangle color="#a5a5a5" />
          </SmallButton>
          <SmallButton off>
            <Small><path d="M2.500.5h8l3 3v12h-11z" fill={PALE} stroke={STEEL} /><path d="M4 14l9-10 2 2-9 9z" fill="#a9bad4" /></Small>
            <span>Edit</span>
          </SmallButton>
          <SmallButton>
            <Small><path d="M1 0h10v14H1z" fill="#ffe08a" /><circle cx="11" cy="11" r="4.500" fill="#ddd" stroke="#777" /><path d="M11 8v3h2" stroke="#333" /><path d="M8 15C2 15 2 8 8 7" stroke="#27a83c" strokeWidth="2.500" /></Small>
            <span>History</span>
          </SmallButton>
        </SmallColumn>
      </div>
      <GroupLabel>Open</GroupLabel>
    </Group>
    <Group w={115} pad={7}>
      <div>
        <SmallColumn left={0}>
          {['Select all', 'Select none', 'Invert selection'].map((t, i) => (
            <SmallButton key={t}>
              <Small>
                {[[1, 1], [9, 1], [1, 9], [9, 9]].map(([x, y], j) => {
                  const on = i === 0 || (i === 2 && (j === 1 || j === 2));
                  return <rect key={j} x={x + (on ? 0 : 0.5)} y={y + (on ? 0 : 0.5)} width={on ? 6 : 5} height={on ? 6 : 5} fill={on ? '#bfe3fb' : '#fff'} stroke={on ? '#2f8fe0' : '#999'} strokeWidth={on ? 1.5 : 1} />;
                })}
              </Small>
              <span>{t}</span>
            </SmallButton>
          ))}
        </SmallColumn>
      </div>
      <GroupLabel>Select</GroupLabel>
    </Group>
  </Ribbon>
);

const Arrow = ({ d, color }: { d: string; color: string }) => (
  <svg width="16" height="16" viewBox="0 0 16 16" fill="none" stroke={color} strokeWidth="1.800"><path d={d} /></svg>
);
const BACK = 'M15 8H2M8 2L2 8l6 6';
const FORWARD = 'M1 8h13M8 2l6 6-6 6';

const ExplorerWindow = () => (
  <Explorer>
    <TitleBar>
      <TitleLeft>
        <FolderIcon />
        <Divider />
        <PropsIcon />
        <FolderIcon />
        <svg width="8" height="8" viewBox="0 0 8 8"><path d="M0 1h8" stroke="#222" /><path d="M0 4h8L4 8z" fill="#222" /></svg>
        <Divider />
        <span>USB</span>
      </TitleLeft>
      <CaptionButtons pad={2}>
        <button aria-label="Minimize"><Caption kind="min" color="#888" /></button>
        <button aria-label="Restore"><Caption kind="restore" color="#888" /></button>
        <button aria-label="Close"><Caption kind="close" color="#777" /></button>
      </CaptionButtons>
    </TitleBar>
    <RibbonTabs>
      <RibbonTab kind="file">File</RibbonTab>
      <RibbonTab kind="active">Home</RibbonTab>
      <RibbonTab>Share</RibbonTab>
      <RibbonTab>View</RibbonTab>
      <HelpArea>
        <Chevron dir="up" color="#aaa" />
        <HelpButton aria-label="Help">?</HelpButton>
      </HelpArea>
    </RibbonTabs>
    <RibbonBar />
    <AddressRow>
      <NavButtons>
        <Arrow d={BACK} color="#666" />
        <Arrow d={FORWARD} color="#ddd" />
        <Chevron size={8} color="#888" />
        <Arrow d="M8 15V2M2 8l6-6 6 6" color="#666" />
      </NavButtons>
      <AddressBox>
        <FolderIcon />
        <ol>
          <li><Chevron dir="right" size={9} /></li>
          {['OneDrive', 'Documents', 'USB'].map((t) => (
            <li key={t}><a href="#">{t}</a><Chevron dir="right" size={9} /></li>
          ))}
        </ol>
        <button aria-label="Previous locations"><Chevron color="#666" width={2} /></button>
        <Refresh aria-label="Refresh">
          <svg width="14" height="14" viewBox="0 0 14 14" fill="none" stroke="#666" strokeWidth="1.800"><path d="M9.500 3a5 5 0 1 1-5 0" /><path d="M3 1.500h4.500V6" /></svg>
        </Refresh>
      </AddressBox>
      <SearchBox>
        <Magnifier color="#888" />
        <input type="text" aria-label="Search USB" placeholder="Search USB" />
      </SearchBox>
    </AddressRow>
    <Body>
      <Tree aria-label="Folders">
        {tree.map((g) => (
          <ul key={g.root.label}>
            <li><TreeLink href="#" root>{g.root.icon}<span>{g.root.label}</span></TreeLink></li>
            {g.items.map((it) => (
              <li key={it.label}>
                <TreeLink href="#" active={it.active}>
                  {it.icon}<span>{it.label}</span>{it.pin && <PinIcon size={10} />}
                </TreeLink>
              </li>
            ))}
          </ul>
        ))}
      </Tree>
      <ListPane>
        <FileTable>
          <colgroup><col width="260" /><col width="120" /><col width="120" /><col width="80" /></colgroup>
          <thead>
            <tr>
              <th>Name</th>
              <th>Date modified<SortMark><Chevron size={8} color="#999" /></SortMark></th>
              <th>Type</th>
              <th>Size</th>
            </tr>
          </thead>
          <tbody>
            {files.map(([kind, name, date, type, size]) => (
              <tr key={name}>
                <td><FileName href="#"><FileIcon kind={kind} />{name}</FileName></td>
                <td>{date}</td>
                <td>{type}</td>
                <td>{size}</td>
              </tr>
            ))}
          </tbody>
        </FileTable>
      </ListPane>
      <Scrollbar w={16}>
        <Chevron dir="up" color="#555" width={2} />
        <Thumb before={25} h={312} w={16} />
        <Chevron color="#555" width={2} />
      </Scrollbar>
    </Body>
    <StatusBar>
      <span>85 items</span>
      <Divider c="#e8e8e8" />
      <div>
        <ViewButton active aria-label="Details view">
          <Small><path d="M.5.500h4v4h-4zM.5 6.500h4v4h-4zM.5 11.500h4v4h-4z" fill="#fff" stroke="#888" strokeWidth=".8" /><path d="M7 2.500h3M12 2.500h3M7 8.500h3M12 8.500h3M7 13.500h3M12 13.500h3" stroke="#666" /></Small>
        </ViewButton>
        <ViewButton aria-label="Large icons view"><PictureIcon /></ViewButton>
      </div>
    </StatusBar>
    <Bar>
      <BarButton w={48} aria-label="Start"><WinLogo /></BarButton>
      <BarSearch>
        <Magnifier color="#222" />
        <input type="text" aria-label="Type here to search" placeholder="Type here to search" />
      </BarSearch>
      <BarButton w={50} aria-label="Cortana"><CortanaIcon /></BarButton>
      <BarButton w={49} aria-label="Task View"><TaskViewIcon /></BarButton>
      <Apps w={598} />
      <Tray>
        <Chevron dir="up" size={13} color="#fff" width={1} />
        <svg width="14" height="16" viewBox="0 0 14 16" fill="none" stroke="#fff"><path d="M2.500 5.500h6v6h-6zM8.500 8l3-2v5l-3-2M3 3c2-2.500 6-2.500 8 0M3 13.500c2 2.500 6 2.500 8 0" /></svg>
        <svg width="15" height="15" viewBox="0 0 15 15" fill="none" stroke="#ddd"><circle cx="12.500" cy="12.500" r="1" fill="#fff" /><path d="M1 14C1 7 7 1 14 1M4.500 14C4.500 9 9 4.500 14 4.500M8 14c0-3 3-6 6-6" /></svg>
        <Time />
        <Notice aria-label="Notifications">
          <svg width="17" height="17" viewBox="0 0 17 17"><path d="M0 0h17v13h-8l-4 4v-4H0z" fill="#fff" /><path d="M3 4h11M3 7h11M3 10h7" stroke="#202020" /></svg>
          <span>1</span>
        </Notice>
      </Tray>
    </Bar>
  </Explorer>
);

/* ---------- browser ---------- */

const METAL = css`
  background-color: #adadad;
  background-image:
    repeating-linear-gradient(180deg, rgba(255, 255, 255, 0.12) 0 1px, transparent 1px 3px, rgba(0, 0, 0, 0.05) 3px 4px, transparent 4px 7px),
    linear-gradient(90deg, #a9a9a9, #b4b4b4 30%, #a8a8a8 60%, #b0b0b0);
`;
const Browser = styled.section`
  display: flex;
  flex-direction: column;
  height: 75vh;
  min-width: 0;
`;
const TabStrip = styled.div`
  display: flex;
  height: 34px;
  padding-left: 8px;
  background-color: #3a3a3a;
  background-image: repeating-conic-gradient(#2d2d2d 0 25%, #484848 0 50%);
  background-size: 8px 8px;
`;
const Tabs = styled.div`
  display: grid;
  grid-template-columns: repeat(13, minmax(0, 1fr));
  width: 1135px;
`;
const Tab = styled.div<{ active?: boolean }>`
  display: flex;
  align-items: center;
  padding: 0 6px 0 12px;
  border-radius: 8px 8px 0 0;
  background: ${(p) => (p.active ? '#adadad' : '#c4c4c4')};
  border-right: 1px solid ${(p) => (p.active ? '#adadad' : '#8e8e8e')};
  a { display: flex; align-items: center; gap: 8px; flex: 1; min-width: 0; }
  a > span:last-child {
    flex: 1;
    overflow: hidden;
    white-space: nowrap;
    mask-image: linear-gradient(90deg, #000 40%, transparent 90%);
  }
`;
const Fav = styled.span`
  display: flex;
  width: 16px;
  height: 16px;
  flex: none;
  align-items: center;
  justify-content: center;
`;
const Tile = styled.span<{ bg: string; fg: string; big?: boolean }>`
  width: 16px;
  height: 16px;
  background: ${(p) => p.bg};
  color: ${(p) => p.fg};
  font-size: ${(p) => (p.big ? 15 : 9)}px;
  font-weight: ${(p) => (p.big ? 700 : 600)};
  line-height: 16px;
  text-align: center;
`;
const CloseTab = styled.button`
  display: flex;
  padding: 2px;
`;
const NewTab = styled.button`
  display: flex;
  align-items: center;
  justify-content: center;
  width: 28px;
  height: 28px;
  margin: 3px 0 0 8px;
  border-radius: 50%;
  background: #b9b9b9;
`;
const Toolbar = styled.div`
  display: flex;
  align-items: center;
  height: 36px;
  padding: 0 8px 0 14px;
  ${METAL}
`;
const ToolButtons = styled.div`
  display: flex;
  gap: 16px;
  width: 126px;
`;
const Omnibox = styled.label`
  display: flex;
  align-items: center;
  flex: 1;
  height: 28px;
  padding: 0 10px;
  border-radius: 14px;
  background: #fcfcfc;
  font-size: 13px;
  > span { margin: 0 6px 0 8px; color: #555; }
  input { flex: 1; margin-left: 8px; color: #222; }
`;
const Extensions = styled.div`
  display: flex;
  gap: 16px;
  width: 200px;
  padding-left: 14px;
  align-items: center;
`;
const Avatar = styled.button`
  width: 22px;
  height: 22px;
  margin-left: -3px;
  border-radius: 50%;
  background: #455a64;
  color: #fff;
  font-size: 12px;
  flex: none;
`;
const Update = styled.button`
  display: flex;
  align-items: center;
  justify-content: space-between;
  width: 82px;
  height: 28px;
  padding: 0 10px 0 12px;
  border: 1px solid #188038;
  border-radius: 14px;
  background: #e4eae5;
  color: #188038;
  font-size: 11px;
`;
const Bookmarks = styled.nav`
  display: flex;
  align-items: flex-start;
  height: 33px;
  padding: 6px 16px 0 14px;
  ${METAL}
  > svg { margin: 4px 0 0 auto; }
`;
const Bookmark = styled.a<{ w: number }>`
  display: flex;
  align-items: center;
  gap: 8px;
  width: ${(p) => p.w}px;
  height: 16px;
  white-space: nowrap;
`;
const Viewer = styled.div`
  display: flex;
  flex: 1;
  min-height: 0;
  background: #525659;
`;
const ViewerMain = styled.div`
  position: relative;
  display: flex;
  flex-direction: column;
  flex: 1;
  min-width: 0;
  overflow: hidden;
`;
const PdfBar = styled.header`
  display: grid;
  grid-template-columns: 1fr auto 1fr;
  align-items: center;
  height: 48px;
  flex: none;
  padding: 0 24px;
  background: #323639;
  color: #f1f1f1;
  font: 500 14px Roboto, sans-serif;
  box-shadow: 0 2px 3px rgba(0, 0, 0, 0.3);
  z-index: 1;
  > div { display: flex; align-items: center; gap: 5px; }
  input {
    width: 24px;
    height: 20px;
    background: #191b1c;
    text-align: center;
  }
`;
const PdfTools = styled.div`
  justify-content: flex-end;
  padding-right: 8px;
  && { gap: 16px; }
`;
const Sheet = styled.article`
  display: flex;
  flex-direction: column;
  align-items: center;
  width: 816px;
  flex: 1;
  align-self: center;
  padding: 67px 120px 0;
  background: #fff;
  box-shadow: 0 0 4px rgba(0, 0, 0, 0.5);
  font: 16px "Liberation Serif", "Times New Roman", serif;
  p {
    align-self: stretch;
    margin: 0;
    line-height: 37px;
    text-indent: 48px;
    text-align: justify;
    text-align-last: justify;
  }
`;
const Figure = styled.figure`
  margin: 0;
  figcaption {
    margin-top: 10px;
    padding-left: 24px;
    line-height: 36px;
    text-align: center;
    span { margin-left: 14px; }
  }
`;
const Zoomers = styled.div`
  position: absolute;
  right: 31px;
  bottom: 48px;
  display: flex;
  flex-direction: column;
  gap: 10px;
  button {
    display: flex;
    align-items: center;
    justify-content: center;
    width: 36px;
    height: 36px;
    border-radius: 50%;
    background: #f1f1f1;
    box-shadow: 0 1px 3px rgba(0, 0, 0, 0.4);
  }
  button:first-child { margin-bottom: 14px; }
`;
const Shelf = styled.div`
  display: flex;
  align-items: stretch;
  height: 57px;
  flex: none;
  padding: 0 10px 0 4px;
  border-top: 1px solid #999;
  background: #ddd;
`;
const Download = styled.div<{ on?: boolean }>`
  display: flex;
  align-items: center;
  gap: 12px;
  width: 233px;
  padding: 0 18px 0 16px;
  font-size: 12px;
  color: ${(p) => (p.on ? '#333' : '#222')};
  background: ${(p) => (p.on ? '#bababa' : 'none')};
  a { flex: 1; }
`;
const ShelfLine = styled.i`
  width: 1px;
  margin: 6px 0 6px -1px;
  background: #b0b0b0;
`;
const ShowAll = styled.button`
  align-self: center;
  width: 76px;
  height: 30px;
  margin: 0 12px 0 auto;
  border-radius: 2px;
  background: #d2d2d2;
  color: #222;
  font-weight: 600;
`;
const CloseShelf = styled.button`
  display: flex;
  align-items: center;
`;
const ClockSlot = styled.div`
  display: flex;
  align-items: center;
  margin-left: auto;
  padding-right: 7px;
`;

const Gmail = () => (
  <svg width="16" height="16" viewBox="0 0 16 16">
    <path d="M0 3.500V14h3.500V6z" fill="#4285f4" /><path d="M16 3.500V14h-3.500V6z" fill="#34a853" />
    <path d="M0 3.500C0 2 2 1.500 3.500 2.500L8 6l4.500-3.500V7L8 10.500 0 4.500z" fill="#ea4335" />
    <path d="M12.500 2.500C14 1.500 16 2 16 3.500v1L12.500 7z" fill="#fbbc04" />
  </svg>
);
const dots: [number, number, string][] = [
  [3, 2, '#2fa4ee'], [7, 4, '#2fa4ee'], [11, 6, '#2fa4ee'], [14, 8, '#2fa4ee'], [11, 10, '#2fa4ee'],
  [7, 12, '#2fa4ee'], [3, 14, '#2fa4ee'], [3, 6, '#f5c242'], [7, 8, '#f5c242'], [3, 10, '#f5c242'],
];
const Dots = () => (
  <svg width="16" height="16" viewBox="0 0 16 16">
    {dots.map(([x, y, c], i) => <circle key={i} cx={x} cy={y} r="1.500" fill={c} />)}
  </svg>
);
const Globe = () => <FaGlobeAmericas size={15} color="#5f6368" />;
const XMark = ({ size = 12, color = '#111', width = 1.8 }: { size?: number; color?: string; width?: number }) => (
  <svg width={size} height={size} viewBox="0 0 12 12" stroke={color} strokeWidth={width}><path d="M2 2l8 8M10 2l-8 8" /></svg>
);

const tabs: { t: string; icon: React.ReactNode; active?: boolean }[] = [
  { t: 'Job A', icon: null },
  { t: '(6) N', icon: <svg width="16" height="16" viewBox="0 0 16 16"><FaLinkedin size={16} color="#0a66c2" /><circle cx="14" cy="2" r="2" fill="#f2433a" /></svg> },
  { t: "Hi I'm", icon: <Tile bg="#12a5a5" fg="#063b3b">N</Tile> },
  { t: 'Dem', icon: <svg width="16" height="16" viewBox="0 0 16 16"><path d="M1 12c3-5 6-4 13 0l-2 3.500c-5-3-6-3-8.500 0L1 14z" fill="#1f66e5" /><path d="M15 4c-3 5-6 4-13 0L4 .5c5 3 6 3 8.500 0L15 2z" fill="#2b7cff" /></svg> },
  { t: 'How', icon: <Tile bg="transparent" fg="#b92b27" big>Q</Tile> },
  { t: 'A no', icon: <Gmail /> },
  { t: 'A Lo', icon: <Dots /> },
  { t: 'Onli', icon: <svg width="16" height="16" viewBox="0 0 16 16"><path d="M0 1h6L0 15zM16 1h-6l6 14zM8 6l4 9H9l-1-3H5.500z" fill="#fa1a0e" /></svg> },
  { t: 'Ado', icon: <Tile bg="#001d34" fg="#31a8ff">PsX</Tile> },
  { t: 'ME_', icon: <Gmail /> },
  { t: 'Micr', icon: <Globe />, active: true },
  { t: 'A Lo', icon: <Dots /> },
  { t: 'how', icon: <FcGoogle size={15} /> },
];

const bookmarks: { t: string; w: number; icon: React.ReactNode }[] = [
  {
    t: 'Apps', w: 67,
    icon: (
      <svg width="14" height="14" viewBox="0 0 14 14">
        {['#ea4335', '#ea4335', '#ea4335', '#1e9e5a', '#4285f4', '#fbbc04', '#1e9e5a', '#1e9e5a', '#fbbc04'].map((c, i) => (
          <rect key={i} x={(i % 3) * 5} y={Math.floor(i / 3) * 5} width="3.500" height="3.500" fill={c} />
        ))}
      </svg>
    ),
  },
  { t: 'Gmail', w: 71, icon: <Gmail /> },
  { t: 'Sabina Login', w: 109, icon: <svg width="16" height="16" viewBox="0 0 16 16"><path d="M2 6c0-2 3-3 6-6 3 3 6 4 6 6v10H2z" fill="#7ac143" /><path d="M4 8h2M7 8h2M10 8h2M4 11h2M7 11h2M10 11h2M4 14h2M7 14h2M10 14h2" stroke="#c6eca0" strokeWidth="1.500" /></svg> },
  { t: 'Canvas', w: 78, icon: <svg width="16" height="16" viewBox="0 0 16 16"><circle cx="8" cy="8" r="6.500" fill="none" stroke="#e64a35" strokeWidth="2.500" strokeDasharray="3.600 1.500" /></svg> },
  { t: 'CS7646 – Discussion', w: 148, icon: <Tile bg="#7a3fae" fg="#fff">ed</Tile> },
  { t: 'BuzzPort | Georgia...', w: 154, icon: <svg width="16" height="16" viewBox="0 0 16 16"><path d="M5 2l5 3-3 2z" fill="#eee" /><ellipse cx="9" cy="10" rx="5" ry="4" fill="#e8b62c" transform="rotate(35 9 10)" /><path d="M1 5l4-3 3 4-4 3zM7 7l-3 5M10 7l-3 7M13 10l-2 5M2 15l3-2" stroke="#151515" strokeWidth="1.500" fill="#e8b62c" /></svg> },
  { t: 'CS 313E: Class Notes', w: 150, icon: <Globe /> },
  { t: 'LeetCode', w: 91, icon: <svg width="16" height="16" viewBox="0 0 16 16" fill="none" strokeWidth="2"><path d="M9 2L3 9" stroke="#111" /><path d="M3 8c-1 2 3 6 5 6s3-1 4-2" stroke="#f29f1d" /><path d="M7 9h7" stroke="#ddd" /><circle cx="11" cy="2.500" r="1.500" fill="#e34b3c" /></svg> },
  { t: 'Git Guide', w: 90, icon: <Globe /> },
  { t: 'TWC', w: 66, icon: <svg width="16" height="16" viewBox="0 0 16 16"><path d="M8 .5h6L9.500 6H13L3 15.500 6.500 9H4z" fill="#f4ee3a" stroke="#222" strokeWidth=".8" /></svg> },
  { t: 'WorkInTexas - Login', w: 140, icon: <svg width="16" height="16" viewBox="0 0 16 16"><path d="M0 0h16v16H0z" fill="#fff" /><path d="M5 1h4v3l6 1v5l-5 5-3-4-3 1-4-4h5z" fill="#8cc63f" stroke="#5c8a20" strokeWidth=".5" /></svg> },
];

/* holes of the breadboard, laid out on its two skewed axes */
const holes: [number, number][] = [];
for (let i = -40; i < 60; i++) {
  for (let j = -30; j < 50; j++) {
    const x = 105 + i * 25 + j * 27;
    const y = 770 - i * 12.5 + j * 14.5;
    if (x > 100 && x < 1400 && y > 390 && y < 950) holes.push([x, y]);
  }
}

const CadFigure = () => (
  <svg width="436" height="288" viewBox="105 84 1314 864" preserveAspectRatio="none" role="img" aria-label="CAD rendering">
    <defs>
      <clipPath id="board"><path d="M105 748L735 438l105-35 160 5 150 70 212 110-715 352H105z" /></clipPath>
    </defs>
    <path d="M105 84h1314v864H105z" fill="#c3c7d3" />
    <g stroke="#3d3d42" strokeWidth="2" strokeLinejoin="round">
      <path d="M105 738L735 430l105-35 160 5 150 70 225 120-725 358H105z" fill="#989390" />
      <path d="M1375 590l2 25-667 333h-60z" fill="#7b7571" />
      <g clipPath="url(#board)" fill="#4a4643" stroke="none">
        {holes.map(([x, y], i) => <ellipse key={i} cx={x} cy={y} rx="4.500" ry="3" />)}
      </g>
      {/* base plate and turntable */}
      <path d="M390 585L638 790l325-158v9L638 798 395 662z" fill="#6f7289" />
      <path d="M657 450l306 182-325 158-243-135-5-73z" fill="#9a9bb5" />
      <ellipse cx="681" cy="636" rx="194" ry="106" fill="#6c6c6a" />
      <path d="M487 640c5 60 80 100 195 100s190-60 193-120l-85 75-190 30z" fill="#7b7b78" />
      <path d="M495 635c10-35 60-105 160-120 120-5 215 35 215 95-5 45-30 55-85 78l-180 31c-60-5-120-35-110-84z" fill="#8f8f8c" />
      <circle cx="658" cy="519" r="9" fill="#b0a69a" /><circle cx="850" cy="636" r="9" fill="#a49a8e" />
      <g fill="#555a70" stroke="none"><circle cx="652" cy="479" r="4" /><circle cx="907" cy="629" r="4" /><circle cx="641" cy="761" r="4" /><circle cx="573" cy="694" r="4" /></g>
      {/* small motor */}
      <path d="M490 515l80 5v45l-38 12-42-22z" fill="#1e1e20" />
      <path d="M488 508l32-17 48 10 3 18-25 15-50-8z" fill="#a6aac4" /><path d="M520 530v30h8v-30z" fill="#c8ccd8" />
      {/* horizontal rail */}
      <path d="M598 588l155-72 142 14v18L643 668l-25-50z" fill="#5f6675" />
      <path d="M640 655l250-118M643 640l245-114M645 625l200-95M612 597l145-68M606 592l145-68" stroke="#1f232b" strokeWidth="4" fill="none" />
      <path d="M643 647l250-118" stroke="#9ca8be" strokeWidth="5" />
      <path d="M625 605l158-76 12 7-155 77z" fill="#d6cfc8" />
      <path d="M572 582l68 38 4 48-20 2-4-20-46-22z" fill="#1d1d1f" />
      <path d="M580 640l20-10M585 675l38-20" stroke="#b4bed0" strokeWidth="10" />
      <path d="M488 632l50-28 20 15 25 15v40l-56 28-39-22z" fill="#1b1b1d" />
      <path d="M520 650l60-28M525 650l5 50M535 660l38-16v28l-35 18z" stroke="#555" fill="none" />
      {/* table */}
      <path d="M862 412l22 6 23 82-18 6-14-14z" fill="#7c7f96" />
      <path d="M1145 440l62-30 4 0 14 115-20 8-16-12-10-75z" fill="#8487a0" />
      <path d="M1135 395l72 15-120 62-20-12z" fill="#8e91aa" />
      <path d="M1142 400l34 10-30 18-16-8z" fill="#525668" />
      <path d="M1022 508l140-75 48-22-2 26-162 84 26 82-20 7-18-15z" fill="#8487a0" />
      <path d="M985 330l45-25 25 15-40 15z" fill="#9a9db8" />
      <path d="M845 388v16l45 25 20-10 60 35 0 12 50 36 82-38 66-88v-18z" fill="#83869b" />
      <path d="M845 388l150-58 105-14 68 42-68 96-80 36-53-32-60-38-18 10z" fill="#a5a8bb" />
      <ellipse cx="996" cy="408" rx="75" ry="38" fill="#8d90a4" /><ellipse cx="994" cy="404" rx="72" ry="36" fill="#a6a9bc" />
      <path d="M915 415l65 38M925 405l60 38" fill="none" stroke="#4b4e5c" strokeWidth="3" />
      <g fill="#3c3e48" stroke="none">{[[968, 384], [978, 380], [989, 379], [1021, 378], [1047, 385], [1060, 400], [1046, 425], [1012, 466], [1050, 455], [1074, 365], [1096, 355], [1107, 348], [882, 390]].map(([x, y], i) => <circle key={i} cx={x} cy={y} r="3.500" />)}</g>
      <ellipse cx="934" cy="343" rx="60" ry="30" fill="#a09fb9" />
      <path d="M835 395l105-52" stroke="#26262a" strokeWidth="9" /><path d="M890 367l50-24" stroke="#5a5a66" strokeWidth="6" />
      {/* tower */}
      <path d="M712 245l103-18 36 255-95 30z" fill="#4a505c" />
      {[0, 1, 2, 3, 4, 5, 6].map((i) => <path key={i} d={`M${720 + i * 15} ${255 - i * 3}l36 ${255 - i * 4}`} stroke={i % 2 ? '#8e9bb0' : '#16181c'} strokeWidth="5" />)}
      <path d="M768 255l8 0 16 110-9 3z" fill="#d6cfc8" /><path d="M720 180h14v50h-14z" fill="#d3d8e2" />
      <path d="M708 236l82-34 32 14-1 15-76 33-36-16z" fill="#202022" />
      <ellipse cx="768" cy="217" rx="12" ry="10" fill="#9aa5b8" />
      <path d="M718 128l12-12 35-8 30 6 8 66 4 8-42 20-42-24-3-10z" fill="#1d1d1f" />
      <path d="M718 128l12-12 35-8 30 12-5 22-28 12z" fill="#39393c" /><path d="M762 155v50" stroke="#4a4a4a" />
      <path d="M760 380l73-32 12 90-73 24z" fill="#1a1c20" /><path d="M785 405l42-20 5 30-38 24z" fill="#7f8ca0" />
      <path d="M788 415l40-20M790 425l40-20" stroke="#333a46" strokeWidth="3" />
      <path d="M795 452h12v42h-12z" fill="#c9c4c2" />
      <path d="M748 503l30 18 80-36-5-12 40 20 5 54-17-6-2-26-80 30-54-28z" fill="#1c1c1e" />
      <path d="M800 525l60-26M805 535l65-26" stroke="#555" fill="none" />
      {/* cassette stand */}
      <path d="M213 570l90-57 13 8 3 38 31 11 35-14 5 12 19 160-71 32-48 5-54-32z" fill="#8083a0" />
      <path d="M315 590l75-22 19 160-70 32z" fill="#7b7e93" />
      <path d="M213 570l90-57 13 8c-30 8-40 38-2 45 25 6 55 2 71-10l5 12-72 24-20 18-30-5-25-30z" fill="#a1a2bf" />
      <path d="M288 545c5-15 15-20 28-22l4 40c-20 0-32-8-32-18z" fill="#55586c" />
      <path d="M243 588l26 16v122l-12 2z" fill="#3f4250" /><path d="M292 598l28-8 20 165-10 5-30-10z" fill="#62657a" />
      <path d="M268 605l18 164M228 580l14 160M305 600l14 155" fill="none" />
      <path d="M220 730l80 45 109-48 16 94-107 56-83-45z" fill="#8588a2" />
      <path d="M243 760l50 25 5 60-50-27z" fill="#b9bbcc" /><path d="M330 792l62-30 6 48-70 34z" fill="#b9bbcc" />
      <path d="M246 815l26-18 24 15v32zM330 842l36-26 32-2z" fill="#9a9cb8" />
      <path d="M352 782l40 28 6-10-22-30z" fill="#555869" />
      <path d="M300 775l18 102" />
    </g>
  </svg>
);

const ImageFileIcon = () => (
  <svg width="16" height="16" viewBox="0 0 16 16">
    <path d="M2.500.5h8l3 3v12h-11z" fill="#fff" stroke="#888" /><path d="M4.500 5.500h7v6h-7z" fill="#2f8be0" /><path d="M5 11l3-3 3 3z" fill="#0b4a8c" />
  </svg>
);
const downloads: { t: string; icon: React.ReactNode; on?: boolean }[] = [
  { t: 'Design Review Fin....pdf', icon: <FileIcon kind="pdf" />, on: true },
  { t: 'Prosthetic Finger.gif', icon: <ImageFileIcon /> },
  { t: 'PID.jpg', icon: <ImageFileIcon /> },
];

const BrowserWindow = () => (
  <Browser>
    <TabStrip>
      <Tabs>
        {tabs.map((tab, i) => (
          <Tab key={i} active={tab.active}>
            <a href="#"><Fav>{tab.icon}</Fav><span>{tab.t}</span></a>
            <CloseTab aria-label="Close tab"><XMark /></CloseTab>
          </Tab>
        ))}
      </Tabs>
      <NewTab aria-label="New tab">
        <svg width="14" height="14" viewBox="0 0 14 14" stroke="#111" strokeWidth="2"><path d="M7 1v12M1 7h12" /></svg>
      </NewTab>
      <CaptionButtons pad={0}>
        <button aria-label="Minimize"><Caption kind="min" color="#fff" /></button>
        <button aria-label="Restore"><Caption kind="restore" color="#fff" /></button>
        <button aria-label="Close"><Caption kind="close" color="#fff" /></button>
      </CaptionButtons>
    </TabStrip>
    <Toolbar>
      <ToolButtons>
        <Arrow d={BACK} color="#8a8a8a" />
        <Arrow d={FORWARD} color="#8a8a8a" />
        <svg width="16" height="16" viewBox="0 0 16 16" fill="none" stroke="#5f6368" strokeWidth="2"><path d="M13 4.500A6 6 0 1 0 14 9" /><path d="M14.500 1v5.500H9z" fill="#5f6368" stroke="none" /></svg>
        <svg width="16" height="16" viewBox="0 0 16 16" fill="none" stroke="#5f6368" strokeWidth="1.800"><path d="M1 8.500L8 1.500l7 7M3.500 7v7.500h9V7" /></svg>
      </ToolButtons>
      <Omnibox>
        <svg width="16" height="16" viewBox="0 0 16 16" fill="none" stroke="#5f6368" strokeWidth="1.500"><circle cx="8" cy="8" r="6.500" /><path d="M8 7v4.500M8 4v1.500" /></svg>
        <span>File</span>
        <Divider h={16} c="#999" />
        <input type="text" aria-label="Address" defaultValue="C:/Users/nrioj/Downloads/Design%20Review%20Final2.pdf" />
        <MdStarBorder size={18} color="#444" />
      </Omnibox>
      <Extensions>
        <svg width="16" height="16" viewBox="0 0 16 16"><path d="M5 0h6l5 5v6l-5 5H5l-5-5V5z" fill="#d0130b" /><IconText x="8" y="11" fontSize="7" fill="#fff" textAnchor="middle">ABP</IconText></svg>
        <svg width="16" height="16" viewBox="0 0 16 16" fill="none" strokeWidth="3"><path d="M1 11c2-1 3-3 5-5" stroke="#2f7de0" /><path d="M5 7c1-2 3-3 4-2" stroke="#f3c01c" /><path d="M9 5c2 1 3 3 3 4" stroke="#e0432f" /><path d="M12 8l3 3" stroke="#2f7de0" /></svg>
        <svg width="16" height="16" viewBox="0 0 16 16"><rect width="16" height="16" rx="2" fill="#c4c4c4" /><path d="M5 13V4c0-2 2-2 2 0v9M7 9c2-3 4-2 4 0v4" fill="none" stroke="#fff" strokeWidth="1.500" /></svg>
        <svg width="16" height="16" viewBox="0 0 16 16"><path d="M0 0h16v16H0z" fill="#fff" /><IconText x="8" y="10" fontSize="6" fill="#333" textAnchor="middle">abc</IconText></svg>
        <FaPuzzlePiece size={15} color="#5f6368" />
        <Avatar aria-label="Profile">N</Avatar>
      </Extensions>
      <Update>
        Update
        <svg width="4" height="14" viewBox="0 0 4 14" fill="#188038"><circle cx="2" cy="2" r="1.600" /><circle cx="2" cy="7" r="1.600" /><circle cx="2" cy="12" r="1.600" /></svg>
      </Update>
    </Toolbar>
    <Bookmarks aria-label="Bookmarks">
      {bookmarks.map((b) => (
        <Bookmark key={b.t} href="#" w={b.w}><Fav>{b.icon}</Fav>{b.t}</Bookmark>
      ))}
      <svg width="9" height="9" viewBox="0 0 9 9" fill="none" stroke="#5f6368" strokeWidth="1.600"><path d="M1 1l3 3.500L1 8M5 1l3 3.500L5 8" /></svg>
    </Bookmarks>
    <Viewer>
      <ViewerMain>
        <PdfBar>
          <span>Microsoft Word - Design Review Final2.docx</span>
          <div><input type="text" aria-label="Page number" defaultValue="31" /> / 45</div>
          <PdfTools>
            <MdRotateRight size={20} /><MdDownload size={20} /><MdPrint size={20} />
          </PdfTools>
        </PdfBar>
        <Sheet>
          <Figure>
            <CadFigure />
            <figcaption>Figure 8.<span>CAD rendering of wafer handling machine.</span></figcaption>
          </Figure>
          <p>
            We selected stepper motors to drive all of the axes because they allow high<br />
            precision and open loop control. Servo motors with rotary encoders are capable of higher<br />
            precision but were undesirable due to high costs and time constraints. We estimated that
          </p>
        </Sheet>
        <Zoomers>
          <button aria-label="Fit to page"><svg width="12" height="12" viewBox="0 0 12 12" fill="none" stroke="#555" strokeWidth="1.500"><path d="M4 0v4H0M8 0v4h4M4 12V8H0M8 12V8h4" /></svg></button>
          <button aria-label="Zoom in"><svg width="12" height="12" viewBox="0 0 12 12" stroke="#666" strokeWidth="1.500"><path d="M6 0v12M0 6h12" /></svg></button>
          <button aria-label="Zoom out"><svg width="12" height="12" viewBox="0 0 12 12" stroke="#666" strokeWidth="1.500"><path d="M0 6h12" /></svg></button>
        </Zoomers>
      </ViewerMain>
      <Scrollbar w={17}>
        <svg width="8" height="10" viewBox="0 0 8 10"><path d="M0 7l4-4 4 4z" fill="#505050" /></svg>
        <Thumb before={346} h={17} w={13} />
        <svg width="8" height="10" viewBox="0 0 8 10"><path d="M0 3l4 4 4-4z" fill="#505050" /></svg>
      </Scrollbar>
    </Viewer>
    <Shelf>
      {downloads.map((d) => (
        <React.Fragment key={d.t}>
          <Download on={d.on}>
            {d.icon}
            <a href="#">{d.t}</a>
            <Chevron dir="up" color="#555" />
          </Download>
          <ShelfLine />
        </React.Fragment>
      ))}
      <ShowAll>Show all</ShowAll>
      <CloseShelf aria-label="Close downloads"><XMark size={14} color="#444" width={1.6} /></CloseShelf>
    </Shelf>
    <Bar>
      <BarButton w={48} aria-label="Start"><WinLogo /></BarButton>
      <BarButton w={48} aria-label="Search"><Magnifier color="#fff" /></BarButton>
      <BarButton w={48} aria-label="Cortana"><CortanaIcon /></BarButton>
      <BarButton w={50} aria-label="Task View"><TaskViewIcon /></BarButton>
      <Apps w={686} />
      <ClockSlot><Time /></ClockSlot>
    </Bar>
  </Browser>
);

export default function App() {
  return (
    <StyleSheetManager shouldForwardProp={forward}>
      <Global />
      <Desktop>
        <ExplorerWindow />
        <BrowserWindow />
      </Desktop>
    </StyleSheetManager>
  );
}
